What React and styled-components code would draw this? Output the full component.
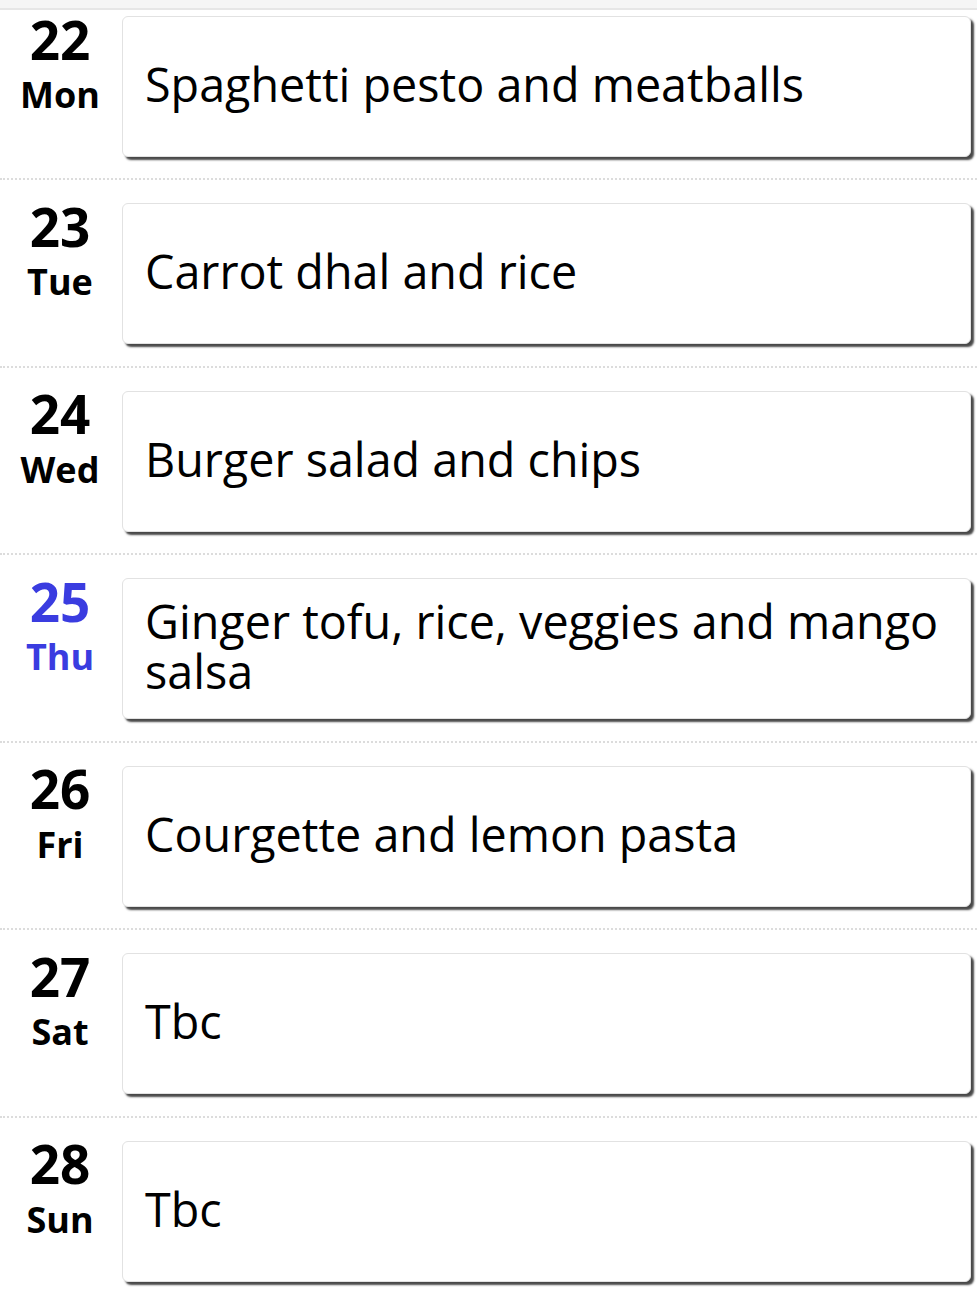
import styled, { createGlobalStyle } from "styled-components";

const GlobalStyle = createGlobalStyle`
  html, body {
    margin: 0;
    padding: 0;
    background: #ffffff;
  }
  body {
    font-family: "Open Sans", "Noto Sans", sans-serif;
    color: #000;
  }
`;

const TopBar = styled.div`
  height: 8px;
  background: #f5f5f5;
  border-bottom: 2px solid #e6e6e6;
`;

const List = styled.div`
  display: flex;
  flex-direction: column;
`;

const Row = styled.div`
  display: flex;
  align-items: flex-start;
  box-sizing: border-box;
  height: ${(p) => (p.$first ? "170px" : "187.5px")};
  padding: ${(p) => (p.$first ? "6px" : "23px")} 6px 0 0;
  border-bottom: 2px dotted #dcdcdc;

  &:last-child {
    border-bottom: none;
  }
`;

const DateCol = styled.div`
  width: 122px;
  flex-shrink: 0;
  display: flex;
  flex-direction: column;
  align-items: center;
  font-weight: 700;
  color: ${(p) => (p.$today ? "#3a3ce0" : "#000")};
  padding-right: 2px;
  box-sizing: border-box;
`;

const DayNum = styled.div`
  font-size: 53px;
  line-height: 56px;
  margin-top: -4.5px;
`;

const DayName = styled.div`
  font-size: 36px;
  line-height: 40px;
  margin-top: 7.5px;
`;

const Card = styled.div`
  flex: 1;
  height: 141px;
  box-sizing: border-box;
  display: flex;
  align-items: center;
  padding: 0 20px 5px 22px;
  background: #fff;
  border: 1px solid #e2e2e2;
  border-radius: 6px;
  box-shadow: 3px 3px 2px rgba(40, 40, 40, 0.85);
  font-size: 46.7px;
  line-height: 50px;
  font-weight: 400;
`;

const meals = [
  { n: 22, d: "Mon", meal: "Spaghetti pesto and meatballs" },
  { n: 23, d: "Tue", meal: "Carrot dhal and rice" },
  { n: 24, d: "Wed", meal: "Burger salad and chips" },
  { n: 25, d: "Thu", meal: "Ginger tofu, rice, veggies and mango salsa", today: true },
  { n: 26, d: "Fri", meal: "Courgette and lemon pasta" },
  { n: 27, d: "Sat", meal: "Tbc" },
  { n: 28, d: "Sun", meal: "Tbc" },
];

const App = () => {
  return (
    <>
      <GlobalStyle />
      <TopBar />
      <List>
        {meals.map((m, i) => (
          <Row key={m.n} $first={i === 0}>
            <DateCol $today={m.today}>
              <DayNum>{m.n}</DayNum>
              <DayName>{m.d}</DayName>
            </DateCol>
            <Card>{m.meal}</Card>
          </Row>
        ))}
      </List>
    </>
  );
};

export default App;
